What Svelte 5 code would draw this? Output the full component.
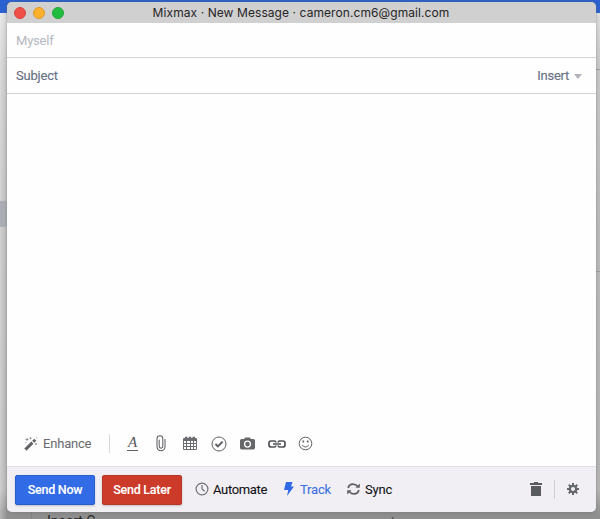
<script>
  const title = 'Mixmax · New Message · cameron.cm6@gmail.com';
</script>

<div class="desktop">
  <div class="backdrop">
    <div class="side"></div>
    <div class="blue"></div>
    <div class="selected"></div>
    <div class="rule top"></div>
    <div class="rule lower"></div>
    <div class="column"></div>
    <span class="under">Insert C</span>
    <span class="caret">I</span>
  </div>

  <main class="window">
    <header class="titlebar">
      <div class="lights"><i class="red"></i><i class="yellow"></i><i class="green"></i></div>
      <h1>{title}</h1>
    </header>
    <div class="field to"><span>Myself</span></div>
    <div class="field subject">
      <span>Subject</span>
      <span class="insert">Insert <i class="arrow"></i></span>
    </div>
    <section class="body"></section>

    <div class="tools">
      <svg class="wand" width="14" height="14" viewBox="0 0 14 14">
        <path d="M1.4 12.6 8.4 5.6" stroke="#626366" stroke-width="3" />
        <path d="m9.2 4.8 2.1-2.1" stroke="#626366" stroke-width="2.8" />
        <path d="M3 1v3M1.5 2.5h3M6.5.3v2M5.5 1.3h2M12 6v2M11 7h2M1.5 5.5h1M12.8.3v1" stroke="#88898c" stroke-width=".9" />
      </svg>
      <span class="enhance">Enhance</span>
      <i class="divider"></i>
      <span class="letter">A</span>
      <svg class="clip" width="10" height="17" viewBox="0 0 10 17" fill="none" stroke="#606165" stroke-width="1.05" stroke-linecap="round">
        <path d="M9 4.3v7.5a4 4 0 0 1-8 0V3.7a2.9 2.9 0 0 1 5.8 0v7.6a1.8 1.8 0 0 1-3.6 0V5" />
      </svg>
      <svg class="calendar" width="14" height="15" viewBox="0 0 14 15">
        <path fill="#6b6c70" fill-rule="evenodd" d="M1 2h1V.8h2.5V2h1.3V.8h2.4V2h1.3V.8H12V2h1q1 0 1 1v10q0 1-1 1H1q-1 0-1-1V3q0-1 1-1ZM1 5v2h2V5Zm3 0v2h3V5Zm4 0v2h2V5Zm3 0v2h2V5ZM1 8v2h2V8Zm3 0v2h3V8Zm4 0v2h2V8Zm3 0v2h2V8ZM1 11v2h2v-2Zm3 0v2h3v-2Zm4 0v2h2v-2Zm3 0v2h2v-2Z" />
      </svg>
      <svg class="check" width="16" height="16" viewBox="0 0 16 16" fill="none" stroke="#5e5f62">
        <circle cx="8" cy="8" r="7" stroke-width="1" /><path d="m4.5 8 2.4 2.4 4.7-4.8" stroke-width="2" />
      </svg>
      <svg class="camera" width="15" height="13" viewBox="0 0 15 13">
        <path fill="#66676a" fill-rule="evenodd" d="M1.6 2h2.5l1-1.6h4.8l1 1.6h2.5Q15 2 15 3.6v7.2q0 1.6-1.6 1.6H1.6Q0 12.4 0 10.8V3.6Q0 2 1.6 2ZM7.5 3.5a3.6 3.6 0 1 0 0 7.2 3.6 3.6 0 1 0 0-7.2Zm0 1.3a2.3 2.3 0 1 1 0 4.6 2.3 2.3 0 1 1 0-4.6Z" />
      </svg>
      <svg class="link" width="18" height="8" viewBox="0 0 18 8" fill="none" stroke="#525357" stroke-width="1.7">
        <path d="M7.7 2.6V2.2Q7.7 1 6.5 1H3.2Q1 1 1 3v2q0 2 2.2 2h3.3q1.2 0 1.2-1.2v-.4M10.3 2.6v-.4q0-1.2 1.2-1.2h3.3Q17 1 17 3v2q0 2-2.2 2h-3.3q-1.2 0-1.2-1.2v-.4M5 4h8" />
      </svg>
      <svg class="smile" width="15" height="15" viewBox="0 0 15 15" fill="none" stroke="#606165">
        <circle cx="7.5" cy="7.5" r="6.3" /><path d="M4.1 8.9q3.4 4.2 6.8 0" /><path d="M5.3 4.5V6.5M9.7 4.5V6.5" stroke-width="1.6" />
      </svg>
    </div>

    <footer>
      <button class="now">Send Now</button>
      <button class="later">Send Later</button>
      <svg class="clock" width="14" height="14" viewBox="0 0 14 14" fill="none" stroke="#707175" stroke-width="1.2">
        <circle cx="7" cy="7" r="5.9" /><path d="M7 3v4l2.7 2.3" />
      </svg>
      <span class="automate">Automate</span>
      <svg class="bolt" width="10" height="14" viewBox="0 0 10 14" fill="#2f69e5">
        <path d="M2 0h6.5L7 4.5h3L3 14l1.3-6H0Z" />
      </svg>
      <span class="track">Track</span>
      <svg class="sync-icon" width="13" height="12" viewBox="0 0 13 12" fill="none" stroke="#5f6064" stroke-width="1.8">
        <path d="M1.2 5Q2 1.1 6 1.1q2.7 0 4.5 2.2M11.8 7Q11 10.9 7 10.9q-2.7 0-4.5-2.2" />
        <path d="M12.8.5v4.3H8.5ZM.2 11.5V7.2h4.3Z" fill="#5f6064" stroke="none" />
      </svg>
      <span class="sync">Sync</span>
      <svg class="trash" width="12" height="14" viewBox="0 0 12 14" fill="#595a5e">
        <path d="M4 0h4v1h4v2H0V1h4ZM1 4h10v10H1Z" />
      </svg>
      <i class="divider foot"></i>
      <svg class="gear" width="12" height="12" viewBox="0 0 12 12">
        <circle cx="6" cy="6" r="3.2" fill="none" stroke="#66676b" stroke-width="2.3" />
        <path d="M6 0v2.3M6 9.7V12M0 6h2.3M9.7 6H12M1.75 1.75l1.6 1.6M8.65 8.65l1.6 1.6M1.75 10.25l1.6-1.6M8.65 3.35l1.6-1.6" stroke="#66676b" stroke-width="2" />
      </svg>
    </footer>
  </main>
</div>

<style>
  :global(body) { margin: 0; }
  .desktop { position: relative; box-sizing: border-box; width: 600px; height: 519px; padding: 2px 4px 7px 7px; overflow: hidden; font-family: Roboto, "Liberation Sans", sans-serif; }
  .backdrop { position: absolute; inset: 0; background: linear-gradient(#e2e2e2 13px, #cbcbcb 70px, #bebebe 220px, #b8b8b8 490px, #929192 514px); }
  .backdrop > * { position: absolute; }
  .side { left: 0; top: 13px; width: 7px; height: 506px; background: linear-gradient(90deg, #fff5, #fff0); }
  .blue { left: 0; right: 0; top: 0; height: 13px; background: #2b62d3; }
  .selected { left: 0; top: 201px; width: 7px; height: 26px; background: #adb0b7; }
  .rule { right: 0; width: 5px; height: 1px; background: #a2a2a2; }
  .rule.top { top: 69px; }
  .rule.lower { top: 271px; }
  .column { left: 31px; top: 512px; width: 1px; height: 7px; background: #858585; }
  .under { left: 47px; top: 514px; font: 14px/14px Roboto, sans-serif; color: #252525; }
  .caret { left: 391px; top: 516px; font: 12px/12px Roboto, sans-serif; color: #444; }
  .window { position: relative; height: 510px; display: flex; flex-direction: column; overflow: hidden; border-radius: 5px; background: #fefefe; }
  .desktop::after { content: ""; position: absolute; left: 7px; top: 2px; width: 589px; height: 510px; border-radius: 5px; box-shadow: 0 0 2px #6669, 0 2px 8px #5553; pointer-events: none; }
  .titlebar { position: relative; flex: 0 0 21px; background: #d1d0d1; }
  .lights { display: flex; gap: 7px; padding: 5px 0 0 7px; }
  .lights i { box-sizing: border-box; width: 12px; height: 12px; border-radius: 50%; }
  .red { background: #ef5147; border: 1px solid #d8453e; }
  .yellow { background: #fbb12c; border: 1px solid #db982d; }
  .green { background: #20bd40; border: 1px solid #22a43a; }
  h1 { position: absolute; inset: 0 1px 0 0; margin: 0; font: 400 12px/22px Inter, Roboto, sans-serif; letter-spacing: .08px; text-align: center; color: #252525; white-space: nowrap; }
  .field { box-sizing: border-box; display: flex; justify-content: space-between; align-items: center; padding: 0 14px 0 9px; border-bottom: 1px solid #d2d3d6; font-size: 13px; letter-spacing: -.2px; }
  .to { flex: 0 0 35px; padding-top: 1px; color: #b5b7bf; }
  .subject { flex: 0 0 36px; color: #687087; -webkit-text-stroke: .15px; }
  .insert { display: flex; align-items: center; letter-spacing: -.25px; }
  .arrow { margin: 1px 0 0 5px; border: 4px solid transparent; border-top: 5px solid #b1b3b9; border-bottom: 0; }
  .body { flex: 1; }
  .tools { flex: 0 0 47px; display: flex; align-items: center; padding: 2px 0 0 17px; box-sizing: border-box; }
  .tools svg, .tools span, footer svg, footer span, .divider { flex: none; }
  .enhance { margin-left: 5px; width: 48px; font-size: 13px; letter-spacing: -.2px; color: #68696e; white-space: nowrap; }
  .divider { width: 1px; height: 19px; background: #d9d9dc; }
  .tools .divider { margin-left: 18px; }
  .letter { width: 11px; height: 14px; margin-left: 17px; font: italic 15px/13px "Liberation Serif", serif; border-bottom: 1px solid #606165; color: #55565a; text-align: center; }
  .clip { margin-left: 18px; }
  .calendar { margin-left: 17px; }
  .check { margin-left: 14px; }
  .camera { margin-left: 13px; }
  .link { margin-left: 13px; }
  .smile { margin-left: 12px; }
  footer { flex: 0 0 46px; box-sizing: border-box; display: flex; align-items: center; padding: 0 0 1px 8px; border-top: 1px solid #e1e0e5; background: #f1eff4; font-size: 13px; color: #111216; -webkit-text-stroke: .1px; }
  button { box-sizing: border-box; width: 80px; height: 30px; flex: none; margin-top: 2px; padding: 0 0 1px; border: 1px solid #275dce; border-radius: 2px; background: #316be5; color: white; font: 500 12.5px Roboto, sans-serif; letter-spacing: -.25px; box-shadow: 0 1px 2px #8887; }
  .later { margin-left: 7px; background: #cc3b29; border-color: #b93525; }
  .clock { margin-left: 13px; }
  .automate { margin-left: 4px; width: 56px; letter-spacing: -.35px; white-space: nowrap; }
  .bolt { margin-left: 15px; }
  .track { margin-left: 6px; width: 31px; letter-spacing: -.2px; color: #3971df; }
  .sync-icon { margin-left: 16px; }
  .sync { margin-left: 5px; width: 28px; letter-spacing: -.2px; }
  .trash { margin-left: 137px; }
  .foot { margin-left: 12px; background: #cfced3; }
  .gear { margin-left: 12px; }
</style>
